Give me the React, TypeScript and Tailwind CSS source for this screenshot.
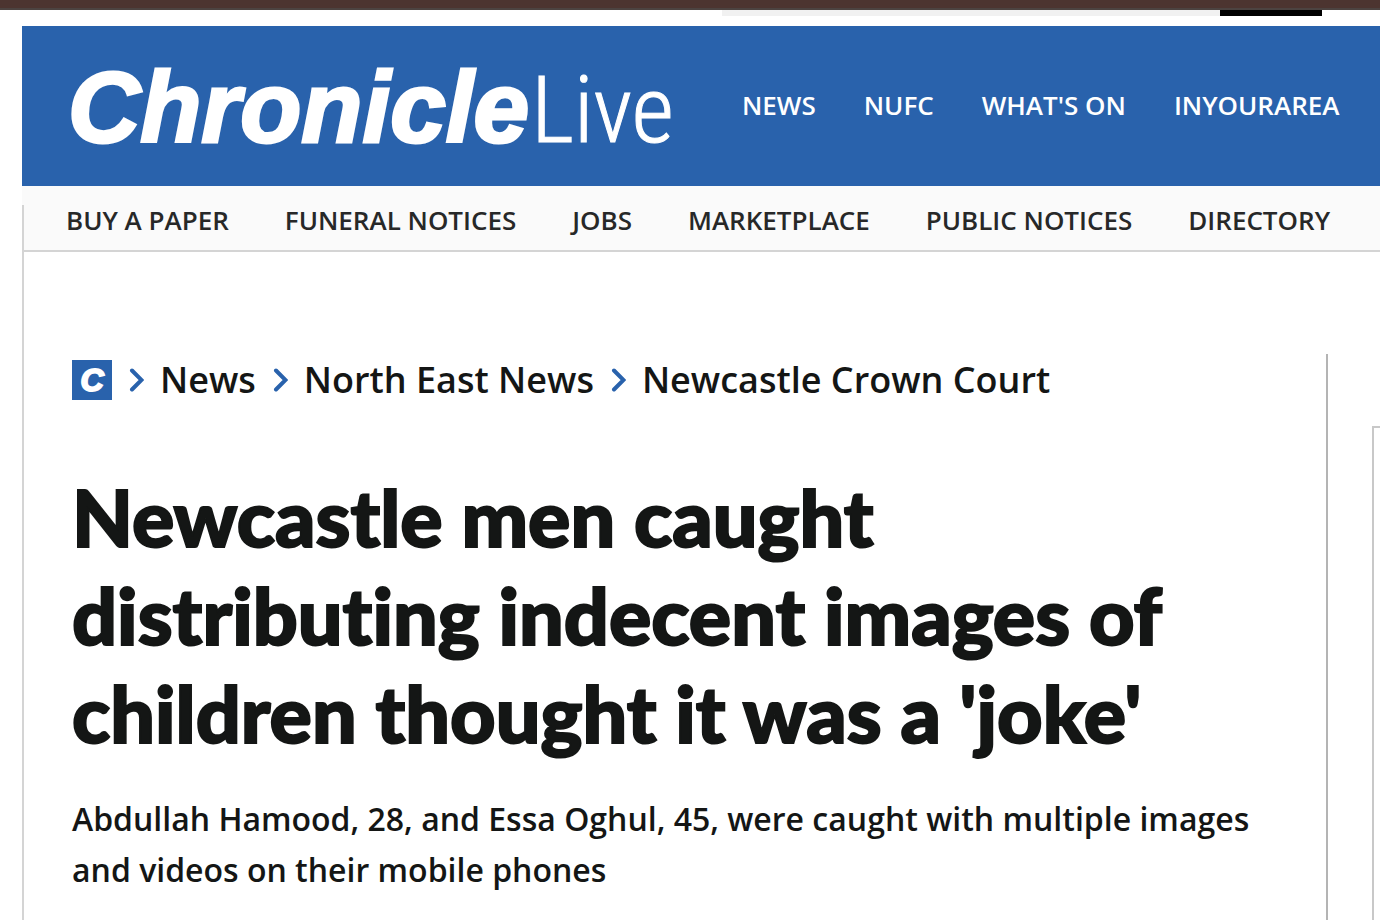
import React from "react";

const primaryLinks = ["NEWS", "NUFC", "WHAT'S ON", "INYOURAREA"];

const secondaryLinks = [
  "BUY A PAPER",
  "FUNERAL NOTICES",
  "JOBS",
  "MARKETPLACE",
  "PUBLIC NOTICES",
  "DIRECTORY",
];

const crumbs = ["News", "North East News", "Newcastle Crown Court"];

function Chevron() {
  return (
    <svg
      aria-hidden="true"
      viewBox="0 0 16 24"
      className="h-6 w-4 shrink-0"
      fill="none"
      stroke="#2962ac"
      strokeWidth="4"
      strokeLinecap="round"
      strokeLinejoin="miter"
    >
      <path d="M4 2.5 13.5 12 4 21.5" />
    </svg>
  );
}

function AdStrip() {
  return (
    <div className="border-t-2 border-[#4c4341]">
      <div className="flex h-4 justify-end pr-[58px]">
        <div className="h-1.5 w-[498px] bg-[#f1f1f1]" />
        <div className="h-1.5 w-[102px] bg-black" />
      </div>
    </div>
  );
}

function Header() {
  return (
    <header className="text-[26px] leading-9 font-semibold whitespace-nowrap">
      <div className="flex h-40 items-center bg-[#2962ac] pb-0.5 pl-[46px] text-white">
        <a href="#home" className="flex items-baseline gap-0.5 pt-2 leading-[120px]">
          <span className="font-['Liberation_Sans',Arial,sans-serif] text-[100px] font-bold italic [-webkit-text-stroke:3px_white]">
            Chronicle
          </span>
          <span className="font-['Roboto_Condensed','Roboto',sans-serif] text-[92px] font-light [-webkit-text-stroke:1px_white]">
            Live
          </span>
        </a>
        <nav aria-label="Main" className="flex gap-12 pl-[68px]">
          {primaryLinks.map((label) => (
            <a key={label} href="#section">
              {label}
            </a>
          ))}
        </nav>
      </div>
      <nav
        aria-label="Services"
        className="flex h-[66px] items-end border-b-2 border-[#d4d4d4] bg-[#fafafa] text-[#272828]"
      >
        <div className="h-[45px] w-0.5 shrink-0 bg-[#d4d4d4]" />
        <ul className="flex gap-14 pb-3 pl-[42px]">
          {secondaryLinks.map((label) => (
            <li key={label}>
              <a href="#service">{label}</a>
            </li>
          ))}
        </ul>
      </nav>
    </header>
  );
}

function Breadcrumbs() {
  return (
    <nav aria-label="Breadcrumb">
      <ol className="flex items-center gap-4 text-[36px] leading-[52px] font-semibold">
        <li>
          <a
            href="#home"
            aria-label="Home"
            className="flex size-10 items-center justify-center bg-[#2962ac] font-['Liberation_Sans',Arial,sans-serif] text-[32px] leading-10 font-bold text-white italic [-webkit-text-stroke:2px_white]"
          >
            C
          </a>
        </li>
        {crumbs.map((label) => (
          <li key={label} className="flex items-center gap-4">
            <Chevron />
            <a href="#topic">{label}</a>
          </li>
        ))}
      </ol>
    </nav>
  );
}

export default function App() {
  return (
    <div className="flex min-h-screen flex-col overflow-x-hidden bg-white font-['Open_Sans',sans-serif] text-[#141615]">
      <div className="h-2 bg-[#4c3430]" />
      <AdStrip />
      <div className="flex grow flex-col pl-[22px]">
        <Header />
        <div className="flex grow border-l-2 border-[#d4d4d4]">
          <main className="mt-[102px] min-w-0 grow border-r-2 border-[#b4b4b4] pr-10 pl-12">
            <Breadcrumbs />
            <h1 className="mt-[62px] font-['Lato','Open_Sans',sans-serif] text-[79px] leading-[98px] font-black [font-variant-ligatures:none] [-webkit-text-stroke:2px_#141615]">
              Newcastle men caught
              <br />
              distributing indecent images of
              <br />
              children thought it was a 'joke'
            </h1>
            <p className="mt-[31px] text-[32px] leading-[51px] font-semibold">
              Abdullah Hamood, 28, and Essa Oghul, 45, were caught with multiple images and videos on
              their mobile phones
            </p>
          </main>
          <aside className="mt-[174px] ml-11 w-2 shrink-0 border-t-2 border-l-2 border-[#c8c8c8]" />
        </div>
      </div>
    </div>
  );
}
